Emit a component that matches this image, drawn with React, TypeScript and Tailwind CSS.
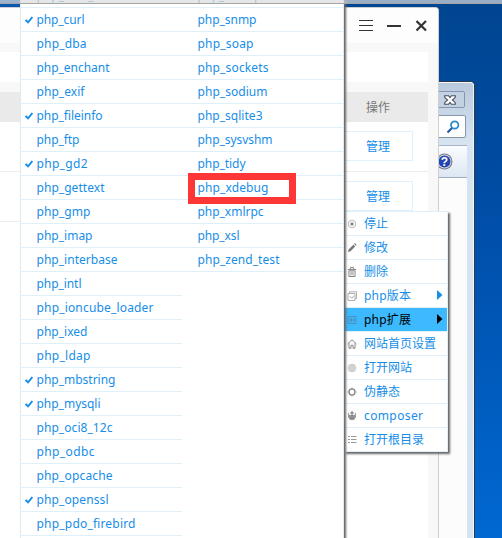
import React from "react";

type Extension = { name: string; width: number; on?: boolean };

const leftColumn: Extension[] = [
  { name: "php_com_dotnet", width: 94 },
  { name: "php_curl", width: 48, on: true },
  { name: "php_dba", width: 50 },
  { name: "php_enchant", width: 73 },
  { name: "php_exif", width: 48 },
  { name: "php_fileinfo", width: 66, on: true },
  { name: "php_ftp", width: 43 },
  { name: "php_gd2", width: 51, on: true },
  { name: "php_gettext", width: 68 },
  { name: "php_gmp", width: 54 },
  { name: "php_imap", width: 56 },
  { name: "php_interbase", width: 81 },
  { name: "php_intl", width: 45 },
  { name: "php_ioncube_loader", width: 117 },
  { name: "php_ixed", width: 51 },
  { name: "php_ldap", width: 54 },
  { name: "php_mbstring", width: 79, on: true },
  { name: "php_mysqli", width: 64, on: true },
  { name: "php_oci8_12c", width: 76 },
  { name: "php_odbc", width: 58 },
  { name: "php_opcache", width: 76 },
  { name: "php_openssl", width: 72, on: true },
  { name: "php_pdo_firebird", width: 99 },
];

const rightColumn: Extension[] = [
  { name: "php_shmop", width: 64 },
  { name: "php_snmp", width: 59 },
  { name: "php_soap", width: 56 },
  { name: "php_sockets", width: 71 },
  { name: "php_sodium", width: 70 },
  { name: "php_sqlite3", width: 65 },
  { name: "php_sysvshm", width: 75 },
  { name: "php_tidy", width: 48 },
  { name: "php_xdebug", width: 71 },
  { name: "php_xmlrpc", width: 66 },
  { name: "php_xsl", width: 42 },
  { name: "php_zend_test", width: 82 },
];

function Label({ name, width }: Extension) {
  return (
    <svg width={width + 2} height="24" className="overflow-visible">
      <text x="-0.5" y="16" textLength={width} lengthAdjust="spacing" fill="currentColor">
        {name}
      </text>
    </svg>
  );
}

function Check() {
  return (
    <svg width="8" height="8" viewBox="0 0 8 8" fill="none" stroke="#168ee8" strokeWidth="1.9">
      <path d="M.5 4 3 6.3 7.4 1" />
    </svg>
  );
}

function Column({ items }: { items: Extension[] }) {
  return (
    <div className="flex-1">
      {items.map((item) => (
        <div key={item.name} className="flex h-6 items-center border-b border-[#e0f0fb] pl-[4px]">
          <span className="flex w-[12px] shrink-0 pt-px">{item.on && <Check />}</span>
          <Label {...item} />
        </div>
      ))}
    </div>
  );
}

function ExtensionMenu() {
  return (
    <div className="absolute top-0 left-5 flex h-[560px] w-[324px] border-x border-[#dcecf5] bg-white shadow-[2px_0_2px_#666]">
      <div className="-mt-4 flex h-fit w-full">
        <Column items={leftColumn} />
        <Column items={rightColumn} />
      </div>
      <div className="absolute top-[173px] left-[167px] h-[31px] w-[108px] border-7 border-[#ff3636]" />
    </div>
  );
}

type Entry = { label: string; icon: React.ReactNode; arrow?: boolean; active?: boolean };

const entries: Entry[] = [
  {
    label: "停止",
    icon: (
      <>
        <circle cx="5" cy="5" r="3.8" stroke="#b4b4b4" strokeWidth=".9" />
        <rect x="3.5" y="3.5" width="3" height="3" fill="#888" stroke="none" />
      </>
    ),
  },
  {
    label: "修改",
    icon: <path d="M1 9 1.6 6.4 6.3 1.7 8.2 3.6 3.5 8.3ZM7 1l1-.8 1.7 1.7-.8.9Z" fill="#777" stroke="none" />,
  },
  {
    label: "删除",
    icon: (
      <>
        <path d="M.8 2.5h8.4M3.3 2V.6h3.4V2" />
        <path d="M1.9 3.8h6.2v5.7H1.9ZM4 4.5v4M6 4.5v4" />
      </>
    ),
  },
  {
    label: "php版本",
    arrow: true,
    icon: <path d="M1 2.5h7v7H1ZM2.5 2.3V.8h7v7H8.2M2.8 5l2 2.3L7 4.5" stroke="#b0b0b0" />,
  },
  {
    label: "php扩展",
    arrow: true,
    active: true,
    icon: <path d="M1 1.5h8v7H1ZM3 3v4M4.5 3v4M6.2 3v4M7.5 4v2" stroke="#4c91bd" />,
  },
  {
    label: "网站首页设置",
    icon: <path d="M.5 5 5 .8 9.5 5M2 4.2v5.1h2V6.2h2v3.1h2V4.2" stroke="#888" />,
  },
  {
    label: "打开网站",
    icon: <path d="M1.2 5a3.8 3.8 0 1 0 7.6 0 3.8 3.8 0 1 0-7.6 0M5 1v8M1 5h8M2 3h6M2 7h6M3.2 2v6M6.8 2v6" stroke="#b4b4b4" strokeWidth=".7" />,
  },
  {
    label: "伪静态",
    icon: (
      <>
        <circle cx="5" cy="5" r="3" stroke="#8a8a8a" strokeWidth="1.4" />
        <path d="M5 0v2M5 8v2M0 5h2M8 5h2" stroke="#bbb" />
      </>
    ),
  },
  {
    label: "composer",
    icon: (
      <>
        <path d="M1 1v5l2 3h4l2-3V1L7.5 4h-5Z" fill="#999" stroke="none" />
        <path d="M3 2h4M5 0v5M3 7h4" stroke="#777" />
      </>
    ),
  },
  {
    label: "打开根目录",
    icon: <path d="M1 1.5h2M4 1.5h5.5M1 4.5h2M4 4.5h5.5M1 7.5h2M4 7.5h5.5" stroke="#999" />,
  },
];

function ContextMenu() {
  return (
    <div className="absolute top-[211px] left-[344px] w-[104px] border-t border-r border-[#e0effa] bg-white shadow-[2px_2px_2px_#666]">
      {entries.map((e) => (
        <div
          key={e.label}
          className={`flex h-6 items-center border-b border-[#e0effa] pl-[3px] ${e.active ? "bg-[#3cb9ff] text-black" : ""}`}
        >
          <svg width="10" height="10" viewBox="0 0 10 10" fill="none" stroke="#888" strokeWidth="1" className="shrink-0">
            {e.icon}
          </svg>
          {/^[a-z]/.test(e.label) ? (
            <svg width="62" height="24" className="ml-[7px] shrink-0 overflow-visible">
              <text x="0" y="16" textLength={e.arrow ? 47 : 59} fill="currentColor">
                {e.label}
              </text>
            </svg>
          ) : (
            <span className="ml-[7px] shrink-0 pt-px text-[12px] leading-[22px] whitespace-nowrap">{e.label}</span>
          )}
          {e.arrow && (
            <svg width="6" height="10" className="-mt-px ml-[11px] shrink-0" fill="currentColor">
              <path d="M0 0 5.5 5 0 10Z" />
            </svg>
          )}
        </div>
      ))}
    </div>
  );
}

function BackWindow() {
  return (
    <div className="absolute top-[81px] left-[420px] h-[480px] w-[55px] rounded-tr-[5px] border-t border-r border-[#303a45] bg-[#d6e4f2]">
      <div className="h-full rounded-tr-[4px] border-t border-r border-white/70 bg-linear-to-b from-[#b9cadc] to-[#d6e4f2] to-[60px] pl-[18px]">
        <div className="mt-[8px] flex h-[17px] w-[27px] items-center justify-center rounded-r-[2px] border border-[#8796b0] bg-[#c3d2e2]">
          <svg width="12" height="10" viewBox="0 0 12 10" className="-ml-[4px]">
            <path d="M.7.7h3.8L6 2.6 7.5.7h3.8v1.6L8.4 5l2.9 2.7v1.6H7.5L6 7.4 4.5 9.3H.7V7.7L3.6 5 .7 2.3Z" fill="#fff" stroke="#484e5c" strokeWidth="1.1" />
          </svg>
        </div>
        <div className="mt-[7px] flex h-[23px] w-[28px] items-center justify-center rounded-r-[2px] border border-[#8795a7] bg-white">
          <svg width="14" height="14" viewBox="0 0 14 14" fill="none" className="ml-[2px]">
            <path d="M6 8 1.5 12.5" stroke="#2459a0" strokeWidth="2.2" />
            <circle cx="8.7" cy="5" r="3.7" stroke="#2f8ac7" strokeWidth="1.8" />
          </svg>
        </div>
        <div className="mt-[7px] flex h-[33px] w-[29px] items-center border-t border-b border-t-[#a8b4c4] border-b-[#9faec0] bg-linear-to-b from-[#fbfdff] to-[#dce6f3]">
          <svg width="17" height="17" viewBox="0 0 17 17" className="-mt-px -ml-[2px] shrink-0">
            <circle cx="8.5" cy="8.5" r="8" fill="#777c88" />
            <circle cx="8.5" cy="8.5" r="6.9" fill="#d7d9e0" />
            <circle cx="8.5" cy="8.5" r="6" fill="#2345b0" />
            <text x="8.5" y="12.5" textAnchor="middle" fill="#fff" className="font-['Liberation_Sans',sans-serif] text-[12px] font-bold">
              ?
            </text>
          </svg>
        </div>
        <div className="h-[382px] w-[29px] bg-[#fcfcfc]" />
      </div>
    </div>
  );
}

function ManageRow() {
  return (
    <div className="flex h-[50px] justify-end border-b border-[#ededed] pt-[9px] pr-[15px]">
      <div className="flex h-[30px] w-[72px] items-center justify-center border border-[#dff1fc] pt-px pl-[2px] text-[#168ee8]">管理</div>
    </div>
  );
}

function MainWindow() {
  return (
    <div className="absolute top-[7px] left-0 h-[540px] w-[439px] overflow-hidden rounded-tr-[4px] border-t border-r border-[#cfcfcf] bg-[#f8f8f8] text-[12px]">
      <div className="flex h-[35px] items-center justify-end bg-[#fdfdfd] pr-[10px]">
        <svg width="70" height="14" fill="none" stroke="#333">
          <path d="M1 1.5h14M1 6.5h14M1 11.5h14" strokeWidth="1" />
          <path d="M29 7h14" strokeWidth="2" />
          <path d="m58.5 2 9.5 9.5m0-9.5-9.5 9.5" strokeWidth="2.2" />
        </svg>
      </div>
      <div className="mt-[9px] h-[30px] w-[428px] bg-white" />
      <div className="mt-[10px] flex h-[30px] w-[428px] items-center justify-end bg-[#eaeaea] pt-[2px] pr-[38px] text-[#777]">操作</div>
      <div className="h-[450px] w-[428px] bg-white">
        <ManageRow />
        <ManageRow />
      </div>
    </div>
  );
}

export default function App() {
  return (
    <div className="relative h-[538px] w-[502px] overflow-hidden bg-linear-to-b from-[#004590] via-[#004ca4] via-35% to-[#0068d2] font-['Noto_Sans','Noto_Sans_CJK_SC',sans-serif] text-[12px] text-[#168ee8]">
      <div className="absolute top-0 left-0 h-4 w-5 bg-[#0858b0]" />
      <BackWindow />
      <MainWindow />
      <ContextMenu />
      <ExtensionMenu />
      <div className="absolute inset-x-0 top-0 h-1 border-b border-[#a5a5a5] bg-[#dcdcdc]/70" />
    </div>
  );
}
